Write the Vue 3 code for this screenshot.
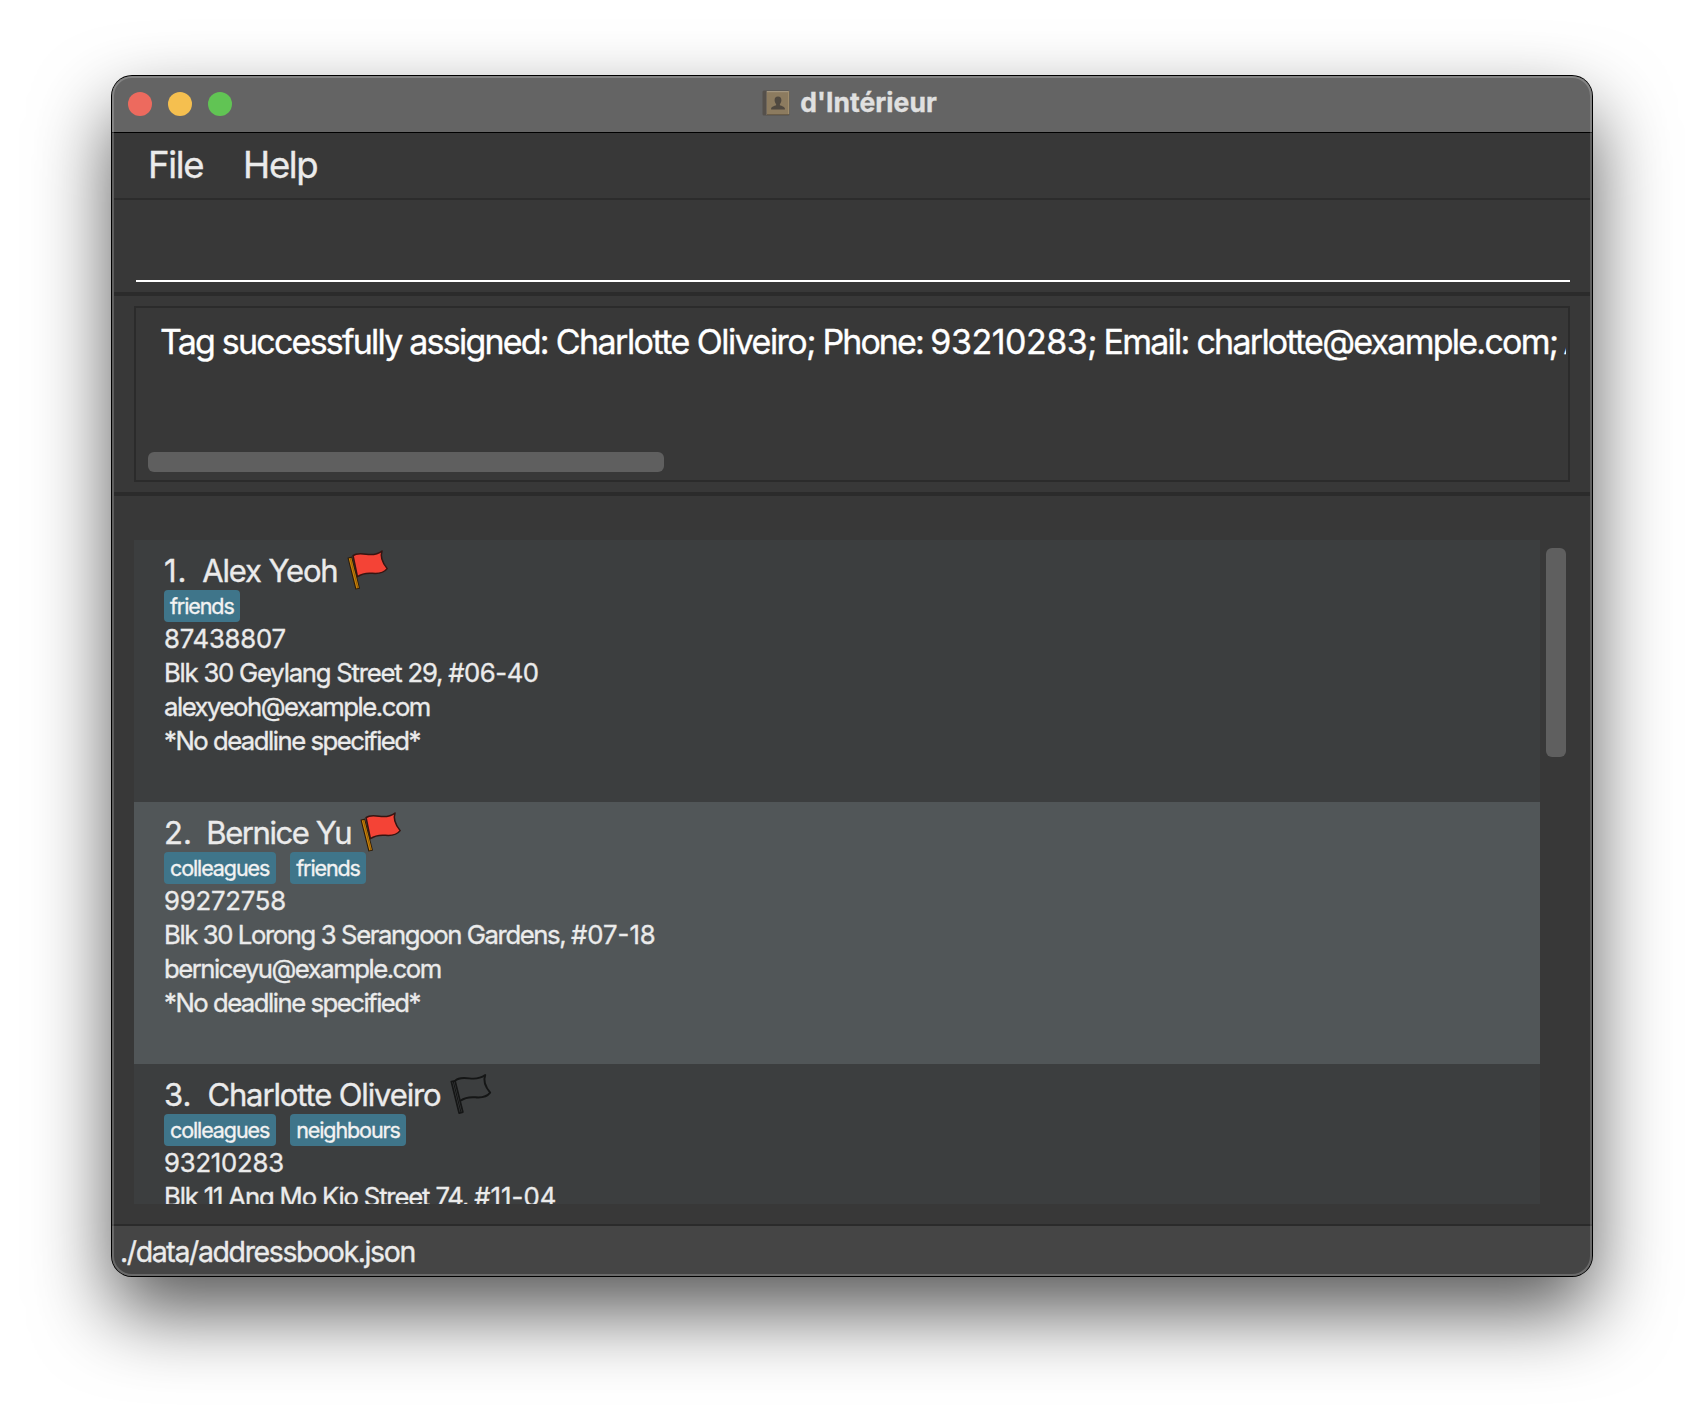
<script setup>
const menus = ['File', 'Help']

const message = [
  { text: 'Tag successfully assigned: ', kind: 'lead' },
  { text: 'Charlotte Oliveiro;', kind: 'person' },
  { text: ' Phone: ', kind: 'label' },
  { text: '93210283', kind: 'digits' },
  { text: '; Email: charlotte@example.com;', kind: 'words' },
  { text: ' Address: Blk 11 Ang Mo Kio Street 74, #11-04', kind: 'tail' },
]

const persons = [
  {
    name: 'Alex Yeoh',
    nameTracking: -1.13,
    flagged: true,
    tags: ['friends'],
    phone: '87438807',
    street: 'Blk 30 Geylang Street 29, ',
    streetTracking: -1.22,
    unit: '#06-40',
    unitTracking: -0.45,
    email: 'alexyeoh@example.com',
    deadline: '*No deadline specified*',
  },
  {
    name: 'Bernice Yu',
    nameTracking: -1.42,
    flagged: true,
    tags: ['colleagues', 'friends'],
    phone: '99272758',
    street: 'Blk 30 Lorong 3 Serangoon Gardens, ',
    streetTracking: -1.4,
    unit: '#07-18',
    unitTracking: 0,
    email: 'berniceyu@example.com',
    deadline: '*No deadline specified*',
  },
  {
    name: 'Charlotte Oliveiro',
    nameTracking: -1.13,
    flagged: false,
    tags: ['colleagues', 'neighbours'],
    phone: '93210283',
    street: 'Blk 11 Ang Mo Kio Street 74, ',
    streetTracking: -1.16,
    unit: '#11-04',
    unitTracking: 0.1,
    email: 'charlotte@example.com',
    deadline: '*No deadline specified*',
  },
]
</script>

<template>
  <div class="desktop">
    <div class="window">
      <header class="titlebar">
        <div class="lights">
          <span class="light close"></span>
          <span class="light minimise"></span>
          <span class="light zoom"></span>
        </div>
        <div class="title">
          <svg class="book" width="28" height="26" viewBox="0 0 28 26">
            <rect x="0.5" y="0.5" width="27" height="25" rx="1.5" fill="#55504b" />
            <rect x="5" y="1" width="22" height="23" fill="#8c7b5f" />
            <rect x="5" y="1" width="22" height="1.2" fill="#a3967f" />
            <rect x="26" y="1" width="1.2" height="23" fill="#a08d6c" />
            <path d="M4.5 1v24" stroke="#6f675c" stroke-width="1" />
            <path d="M5 24.5h22" stroke="#6b5d47" stroke-width="1" />
            <path
              d="M16 6.6c2.3 0 3.5 1.6 3.4 3.8-.1 1.6-.8 2.8-1.5 3.5v1.3c1.6.9 4.5 1.1 5 3.3v1.1H9.100v-1.100c.5-2.200 3.400-2.400 5-3.300v-1.300c-.7-.7-1.400-1.900-1.500-3.500-.1-2.200 1.100-3.800 3.400-3.800z"
              fill="#504940"
            />
          </svg>
          <span class="title-text">d'Intérieur</span>
        </div>
      </header>

      <nav class="menubar">
        <span v-for="menu in menus" :key="menu" class="menu">{{ menu }}</span>
      </nav>

      <section class="command">
        <div class="command-field"></div>
      </section>

      <section class="result">
        <div class="result-box">
          <div class="result-text"><span v-for="part in message" :key="part.text" :class="part.kind">{{ part.text }}</span></div>
          <div class="h-thumb"></div>
        </div>
      </section>

      <main class="list-pane">
        <div class="list">
          <article v-for="(person, index) in persons" :key="person.name" class="card">
            <div class="name-row">
              <span class="index">{{ index + 1 }}.</span>
              <span class="name" :style="{ letterSpacing: person.nameTracking + 'px' }">{{ person.name }}</span>
              <svg class="flag" width="42" height="42" viewBox="0 0 41.5 41.5">
                <g v-if="person.flagged" stroke-linejoin="round" stroke-linecap="round">
                  <path
                    d="M6 6.6C9 4 14 4.5 19 5.2C24 5.9 30 5.5 34.6 2C33 6.5 33.3 11.5 39.7 19.4C37 22.8 31 24.6 25 24C19 23.5 14.5 24.4 10.3 27.4Z"
                    fill="#f44336"
                    stroke="#351512"
                    stroke-width="1.5"
                  />
                  <path d="M2.7 8L10.6 39.5" stroke="#2b1a08" stroke-width="4.6" stroke-linecap="butt" />
                  <path d="M3 9L10.5 38.7" stroke="#d08608" stroke-width="2.6" stroke-linecap="butt" />
                  <path d="M3.2 9L10.7 38.7" stroke="#6b4208" stroke-width="0.6" stroke-linecap="butt" />
                </g>
                <g v-else fill="none" stroke="#151616" stroke-linejoin="round" stroke-linecap="round">
                  <path
                    d="M5 7.8C8 4.5 14 4.6 19 5.3C24 6 30 5.5 34.8 2C33 6.5 33.3 11.5 39.7 19.4C37 22.8 31 24.6 25 24C19 23.5 14.5 24.4 10.3 27.4"
                    stroke-width="1.9"
                  />
                  <path d="M1.3 8.5L5 7.8L12.7 38.6L9 39.6Z" stroke-width="1.7" />
                  <path d="M3.4 9L10.6 38" stroke-width="1.1" />
                </g>
              </svg>
            </div>
            <div class="tags">
              <span v-for="tag in person.tags" :key="tag" class="tag">{{ tag }}</span>
            </div>
            <div class="line phone">{{ person.phone }}</div>
            <div class="line">
              <span :style="{ letterSpacing: person.streetTracking + 'px' }">{{ person.street }}</span>
              <span :style="{ letterSpacing: person.unitTracking + 'px' }">{{ person.unit }}</span>
            </div>
            <div class="line">{{ person.email }}</div>
            <div class="line">{{ person.deadline }}</div>
          </article>
        </div>
        <div class="v-track"><div class="v-thumb"></div></div>
      </main>

      <footer class="statusbar">./data/addressbook.json</footer>
    </div>
  </div>
</template>

<style>
body {
  margin: 0;
  background: #fff;
}
</style>

<style scoped>
.desktop {
  box-sizing: border-box;
  width: 1704px;
  height: 1424px;
  padding: 76px 112px 0;
  overflow: hidden;
  background: #fff;
  font-family: Inter, "Liberation Sans", sans-serif;
  color: #ebebeb;
  -webkit-text-stroke: 0.35px currentColor;
}

.window {
  position: relative;
  display: flex;
  flex-direction: column;
  width: 1480px;
  height: 1200px;
  border-radius: 20px;
  background: #383838;
  box-shadow: 0 0 0 1px #000, 0 36px 78px rgba(0, 0, 0, 0.66);
}

/* translucent rim that runs round the inside of the window */
.window::after {
  content: "";
  position: absolute;
  inset: 0;
  border-radius: 20px;
  box-shadow: inset 0 0 0 2px rgba(255, 255, 255, 0.2);
  pointer-events: none;
}

.titlebar {
  position: relative;
  display: flex;
  align-items: center;
  justify-content: center;
  box-sizing: border-box;
  height: 57px;
  border-bottom: 1px solid #000;
  border-radius: 20px 20px 0 0;
  background: #646464;
}

.lights {
  position: absolute;
  left: 16px;
  top: 16px;
  display: flex;
  gap: 16px;
}

.light {
  width: 24px;
  height: 24px;
  border-radius: 50%;
}

.close {
  background: #ed6a5e;
}

.minimise {
  background: #f5bf4f;
}

.zoom {
  background: #61c454;
}

.title {
  display: flex;
  align-items: center;
  gap: 10px;
  padding: 0 5px 5px 0;
}

.book {
  margin-top: 2px;
}

.title-text {
  font-size: 26.5px;
  font-weight: 700;
  line-height: 32px;
  letter-spacing: 0.05px;
  color: #e0e0e0;
}

.menubar {
  display: flex;
  align-items: center;
  gap: 40px;
  box-sizing: border-box;
  height: 67px;
  margin: 0 2px;
  padding: 0 34px 1px;
  border-bottom: 2px solid #2c2c2c;
}

.menu {
  font-size: 36.5px;
  line-height: 44px;
  letter-spacing: -1.35px;
}

.command {
  box-sizing: border-box;
  height: 96px;
  margin: 0 2px;
  padding: 0 20px 0 22px;
  border-bottom: 4px solid #2b2b2b;
}

.command-field {
  height: 80px;
  border-bottom: 2px solid #fff;
}

.result {
  box-sizing: border-box;
  height: 200px;
  margin: 0 2px;
  padding: 10px 20px 0;
  border-bottom: 4px solid #2b2b2b;
}

.result-box {
  display: flex;
  flex-direction: column;
  justify-content: space-between;
  box-sizing: border-box;
  height: 176px;
  padding: 14px 2px 8px 12px;
  border: 2px solid #2b2b2b;
}

.result-text {
  margin-left: 12px;
  overflow: hidden;
  white-space: pre;
  font-size: 34px;
  line-height: 40px;
  color: #fff;
}

.lead {
  letter-spacing: -1.78px;
}

.person {
  letter-spacing: -1.53px;
}

.label {
  letter-spacing: -1.95px;
}

.digits {
  letter-spacing: -0.5px;
}

.words {
  letter-spacing: -1.75px;
}

.tail {
  margin-left: -1.5px;
  letter-spacing: -1.75px;
}

.h-thumb {
  width: 516px;
  height: 20px;
  border-radius: 6px;
  background: #5f5f5f;
}

.list-pane {
  display: flex;
  gap: 6px;
  box-sizing: border-box;
  height: 728px;
  padding: 44px 26px 20px 22px;
}

.list {
  width: 1406px;
  height: 664px;
  overflow: hidden;
}

.card {
  box-sizing: border-box;
  height: 262px;
  padding: 14px 30px 0;
  background: #3c3e3f;
}

.card:nth-child(even) {
  background: #515658;
}

.name-row {
  display: flex;
  height: 36px;
  font-size: 31px;
  line-height: 34px;
  white-space: pre;
}

.index {
  margin-right: 15px;
}

.card:first-child .index {
  letter-spacing: 0.8px;
}

.card:nth-child(2) .index {
  margin-right: 14.5px;
}

.card:nth-child(3) .index {
  margin-right: 16px;
}

.flag {
  margin: -5px 0 0 9px;
}

.tags {
  display: flex;
  gap: 14.5px;
  height: 32px;
}

.tag {
  padding: 0 6.5px 0 6px;
  border-radius: 4px;
  background: #3f758a;
  font-size: 21.5px;
  line-height: 32px;
  letter-spacing: -1.1px;
  color: #f2f2f2;
}

.line {
  display: flex;
  font-size: 25.7px;
  line-height: 34px;
  letter-spacing: -1.49px;
  white-space: pre;
}

.phone {
  letter-spacing: -0.2px;
}

.v-track {
  width: 20px;
  padding-top: 8px;
}

.v-thumb {
  height: 209px;
  border-radius: 6px;
  background: #5f5f5f;
}

.statusbar {
  box-sizing: border-box;
  height: 52px;
  padding: 1px 8px 0;
  border-top: 2px solid #2b2b2b;
  border-radius: 0 0 20px 20px;
  background: #454545;
  font-size: 28.5px;
  line-height: 50px;
  letter-spacing: -1.39px;
}
</style>
